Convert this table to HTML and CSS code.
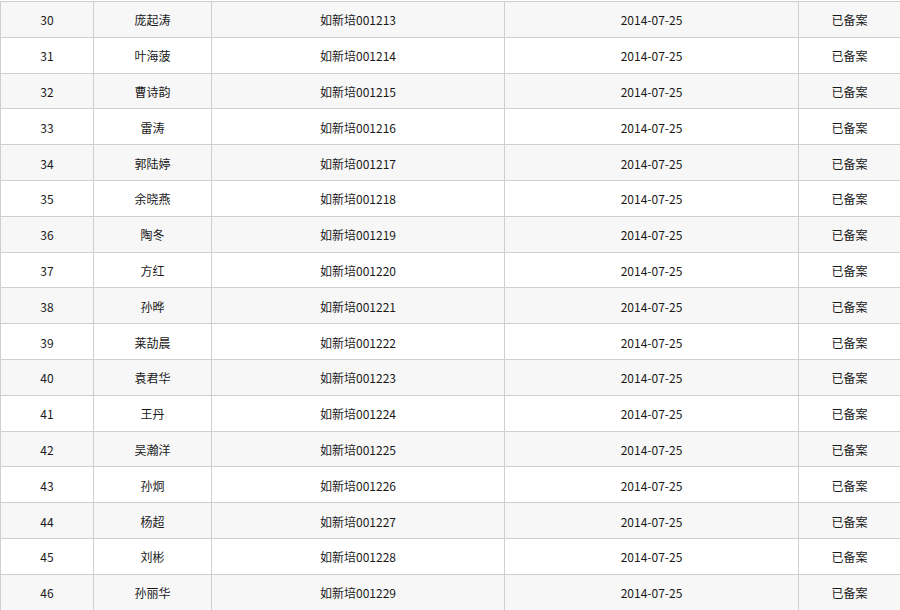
FILE: index.html
```html
<!DOCTYPE html>
<html lang="zh-CN">
<head>
<meta charset="utf-8">
<title>备案列表</title>
<link rel="stylesheet" href="styles.css">
</head>
<body>
<table class="list">
  <colgroup>
    <col class="c-no"><col class="c-name"><col class="c-code"><col class="c-date"><col class="c-state">
  </colgroup>
  <tbody>
    <tr><td>30</td><td>庞起涛</td><td>如新培001213</td><td>2014-07-25</td><td>已备案</td></tr>
    <tr><td>31</td><td>叶海菠</td><td>如新培001214</td><td>2014-07-25</td><td>已备案</td></tr>
    <tr><td>32</td><td>曹诗韵</td><td>如新培001215</td><td>2014-07-25</td><td>已备案</td></tr>
    <tr><td>33</td><td>雷涛</td><td>如新培001216</td><td>2014-07-25</td><td>已备案</td></tr>
    <tr><td>34</td><td>郭陆婷</td><td>如新培001217</td><td>2014-07-25</td><td>已备案</td></tr>
    <tr><td>35</td><td>余晓燕</td><td>如新培001218</td><td>2014-07-25</td><td>已备案</td></tr>
    <tr><td>36</td><td>陶冬</td><td>如新培001219</td><td>2014-07-25</td><td>已备案</td></tr>
    <tr><td>37</td><td>方红</td><td>如新培001220</td><td>2014-07-25</td><td>已备案</td></tr>
    <tr><td>38</td><td>孙晔</td><td>如新培001221</td><td>2014-07-25</td><td>已备案</td></tr>
    <tr><td>39</td><td>莱劼晨</td><td>如新培001222</td><td>2014-07-25</td><td>已备案</td></tr>
    <tr><td>40</td><td>袁君华</td><td>如新培001223</td><td>2014-07-25</td><td>已备案</td></tr>
    <tr><td>41</td><td>王丹</td><td>如新培001224</td><td>2014-07-25</td><td>已备案</td></tr>
    <tr><td>42</td><td>吴瀚洋</td><td>如新培001225</td><td>2014-07-25</td><td>已备案</td></tr>
    <tr><td>43</td><td>孙炯</td><td>如新培001226</td><td>2014-07-25</td><td>已备案</td></tr>
    <tr><td>44</td><td>杨超</td><td>如新培001227</td><td>2014-07-25</td><td>已备案</td></tr>
    <tr><td>45</td><td>刘彬</td><td>如新培001228</td><td>2014-07-25</td><td>已备案</td></tr>
    <tr><td>46</td><td>孙丽华</td><td>如新培001229</td><td>2014-07-25</td><td>已备案</td></tr>
  </tbody>
</table>
</body>
</html>
```

FILE: styles.css
```css
html, body {
  margin: 0;
  padding: 0;
  background: #ffffff;
}
body {
  padding-top: 1px;
  font-family: "Noto Sans CJK SC", "Liberation Sans", sans-serif;
  font-size: 12px;
  color: #1a1a1a;
}
.list {
  border-collapse: collapse;
  table-layout: fixed;
  width: 900px;
}
.c-no { width: 93px; }
.c-name { width: 118px; }
.c-code { width: 293px; }
.c-date { width: 294px; }
.c-state { width: 102px; }
.list td {
  height: 35.8px;
  padding: 2px 0 0;
  box-sizing: border-box;
  line-height: 14px;
  border: 1px solid #cfcfcf;
  text-align: center;
  vertical-align: middle;
}
.list tr:nth-child(odd) td {
  background: #f7f7f7;
}
.list tr:nth-child(even) td {
  background: #ffffff;
}
```
